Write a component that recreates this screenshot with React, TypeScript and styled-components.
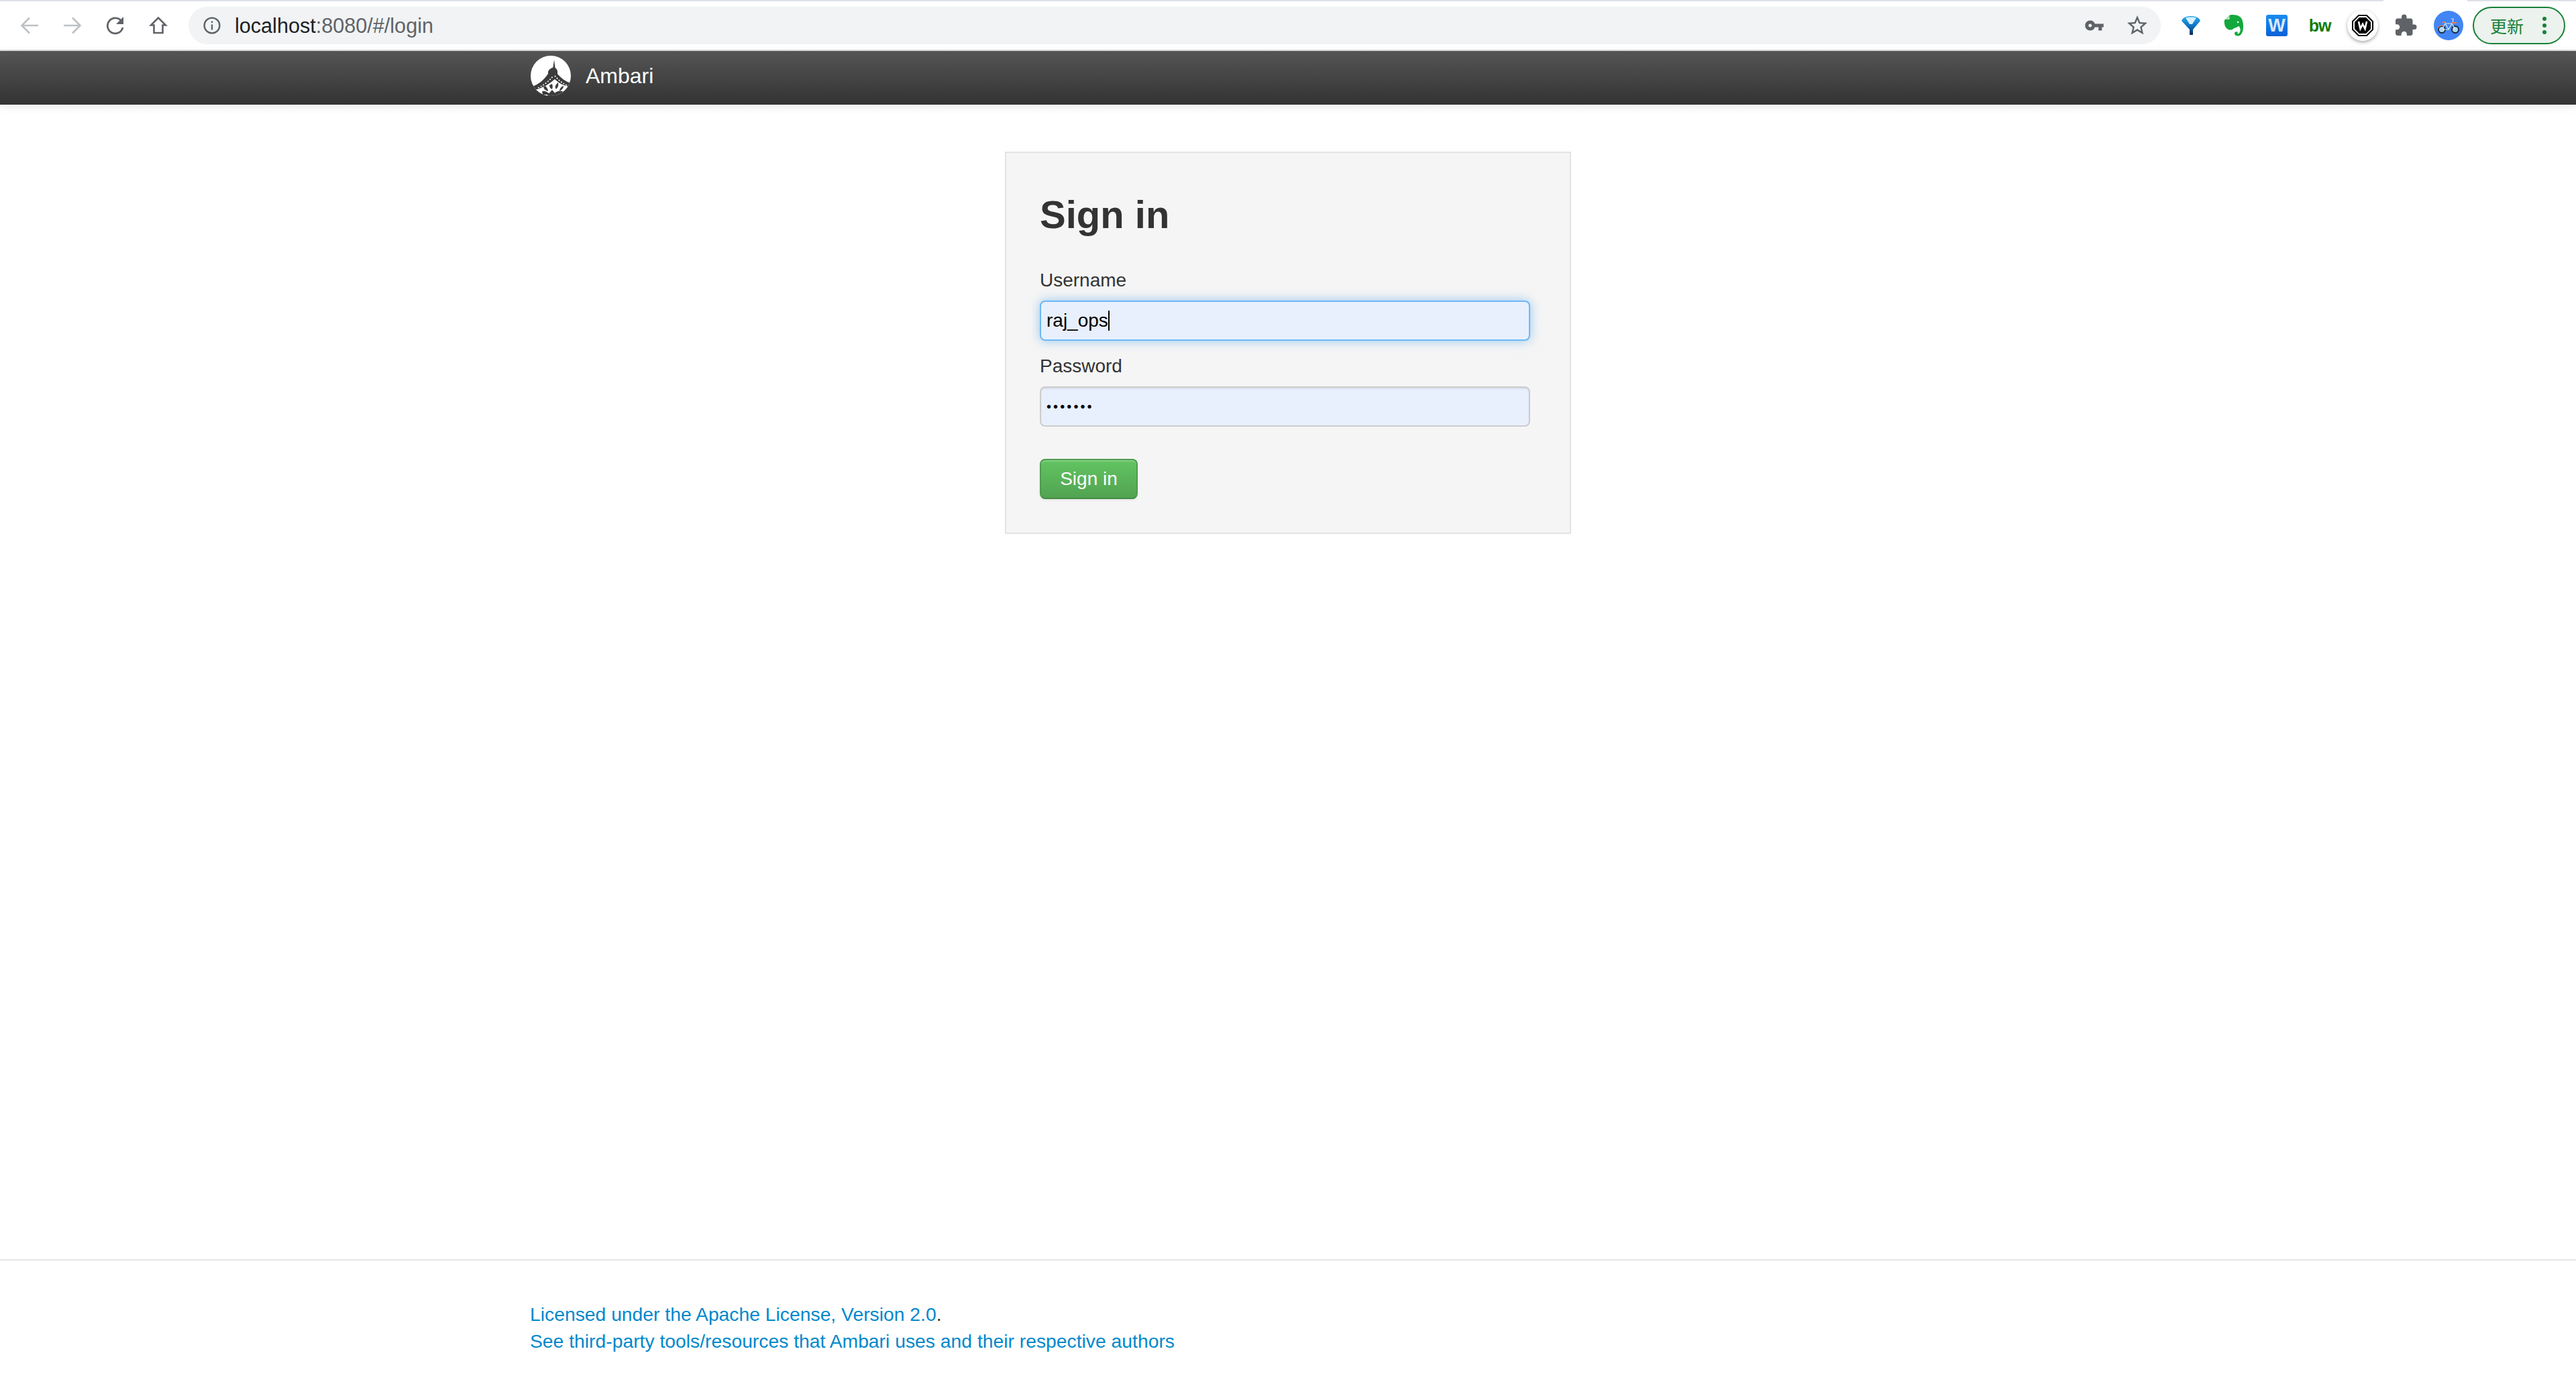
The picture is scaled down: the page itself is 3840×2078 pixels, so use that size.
import React from 'react'
import styled, { createGlobalStyle } from 'styled-components'
import { MdVpnKey, MdStarBorder, MdExtension } from 'react-icons/md'

const GlobalStyle = createGlobalStyle`
  html, body {
    margin: 0;
    height: 100%;
    background: #fff;
    overflow: hidden;
  }

  body {
    font-family: "Liberation Sans", Arial, sans-serif;
    color: #333;
  }

  * {
    box-sizing: border-box;
  }
`

const Page = styled.div`
  height: 2078px;
  display: flex;
  flex-direction: column;
`

const TabStrip = styled.div`
  height: 2px;
  flex: none;
  background: #dee1e6;
  display: flex;
  justify-content: flex-end;
  padding-right: 162px;

  span {
    width: 125px;
    background: #fff;
  }
`

const Toolbar = styled.div`
  height: 74px;
  flex: none;
  display: flex;
  align-items: flex-start;
  padding: 8px 16px 0 12px;
  background: #fff;
  border-bottom: 2px solid #dfe1e5;
`

const ToolGroup = styled.div`
  display: flex;
  flex: none;
`

const ToolButton = styled.div<{ $color?: string }>`
  width: 64px;
  height: 56px;
  display: flex;
  align-items: center;
  justify-content: center;
  color: ${(p) => p.$color || '#5f6368'};
`

const Omnibox = styled.div`
  flex: 1;
  height: 56px;
  margin: 0 13px;
  padding: 0 3px 0 22px;
  border-radius: 28px;
  background: #f1f3f4;
  display: flex;
  align-items: center;
`

const Url = styled.div`
  margin-left: 21px;
  font-size: 30.6px;
  color: #5f6368;
  flex: 1;

  b {
    font-weight: 400;
    color: #202124;
  }
`

const BoxIcon = styled.div`
  width: 32px;
  height: 32px;
  border-radius: 3px;
  background: linear-gradient(180deg, #1a8cf0, #0a62d8);
  color: #d8e8fb;
  font-family: "Liberation Sans", Arial, sans-serif;
  font-weight: 700;
  font-size: 27px;
  line-height: 32px;
  text-align: center;
`

const BwIcon = styled.div`
  color: #0c7c0c;
  font-family: "Liberation Sans", Arial, sans-serif;
  font-weight: 700;
  font-size: 25px;
  letter-spacing: -1px;
  line-height: 1;
`

const RoundBadge = styled.div`
  width: 46px;
  height: 46px;
  border-radius: 50%;
  background: #fff;
  box-shadow: 0 2px 5px rgba(0, 0, 0, 0.35);
  display: flex;
  align-items: center;
  justify-content: center;
`

const UpdateButton = styled.div`
  width: 138px;
  height: 56px;
  margin-left: 4px;
  flex: none;
  border: 2px solid #188038;
  border-radius: 28px;
  background: #ecf2ee;
  color: #188038;
  display: flex;
  align-items: center;
  padding-left: 24px;
  font-family: "Noto Sans CJK SC", "Liberation Sans", sans-serif;
  font-size: 25px;
  line-height: 1;
`

const UpdateDots = styled.span`
  margin-left: 28px;
  display: flex;
  flex-direction: column;
  gap: 4px;

  i {
    width: 6px;
    height: 6px;
    border-radius: 50%;
    background: #188038;
  }
`

const NavBar = styled.nav`
  height: 80px;
  flex: none;
  display: flex;
  align-items: center;
  padding: 0 0 6px 791px;
  background: linear-gradient(180deg, #555, #333);
  box-shadow: 0 3px 12px rgba(0, 0, 0, 0.1);
`

const Brand = styled.span`
  margin-left: 22px;
  color: #fff;
  font-size: 32px;
  line-height: 1;
`

const Main = styled.main`
  flex: 1;
  display: flex;
  justify-content: center;
  align-items: flex-start;
  padding-top: 70px;
`

const Card = styled.form`
  width: 844px;
  padding: 52px 50px 50px;
  background: #f5f5f5;
  border: 2px solid #e3e3e3;
`

const Heading = styled.h2`
  margin: 0 0 38px;
  font-size: 58px;
  line-height: 80px;
  font-weight: 700;
  color: #333;
`

const Label = styled.label`
  display: block;
  margin-bottom: 10px;
  font-size: 28px;
  line-height: 40px;
  color: #333;
`

const Field = styled.div<{ $focused?: boolean }>`
  width: 731px;
  height: 60px;
  margin-bottom: 18px;
  padding: 0 8px;
  display: flex;
  align-items: center;
  background: #e8f0fe;
  border: 2px solid ${(p) => (p.$focused ? '#6db7f5' : '#ccc')};
  border-radius: 8px;
  font-size: 28px;
  color: #000;
  box-shadow: ${(p) =>
    p.$focused
      ? '0 0 16px rgba(82, 168, 236, 0.6)'
      : 'inset 0 2px 2px rgba(0, 0, 0, 0.075)'};
`

const Caret = styled.span`
  width: 2px;
  height: 30px;
  background: #000;
`

const Dots = styled.span`
  font-size: 20px;
  letter-spacing: 3.1px;
  color: #000;
`

const SignInButton = styled.button`
  display: block;
  width: 146px;
  height: 60px;
  margin-top: 48px;
  padding: 0;
  border: 2px solid #4f9a4f;
  border-bottom-color: #448a44;
  border-radius: 8px;
  background: linear-gradient(180deg, #62c462, #51a351);
  box-shadow: inset 0 2px 0 rgba(255, 255, 255, 0.2), 0 2px 4px rgba(0, 0, 0, 0.06);
  color: #fff;
  font-family: "Liberation Sans", Arial, sans-serif;
  font-size: 28px;
`

const Footer = styled.footer`
  height: 201px;
  flex: none;
  padding: 60px 0 0 790px;
  border-top: 2px solid #e5e5e5;
  font-size: 28.3px;
  line-height: 40px;
  color: #333;
`

const FooterLink = styled.a`
  color: #08c;
  text-decoration: none;
`

const HomeIcon = () => (
  <svg width="28" height="28" viewBox="0 0 28 28" fill="none" stroke="currentColor" strokeWidth="2.6">
    <path d="M14 2.500 3 13.500h4.500v11.500h13V13.500H25z" strokeLinejoin="miter" />
  </svg>
)

const BackIcon = ({ flip }: { flip?: boolean }) => (
  <svg width="28" height="26" viewBox="0 0 28 26" fill="none" stroke="#bdc1c6" strokeWidth="2.6" style={flip ? { transform: 'scaleX(-1)' } : undefined}>
    <path d="M27 13H3M14 1.500 2.500 13 14 24.500" />
  </svg>
)

const ReloadIcon = () => (
  <svg width="30" height="28" viewBox="0 0 30 28" fill="none">
    <path d="M24 7.500A11.500 11.500 0 1 0 26 17" stroke="#5f6368" strokeWidth="2.8" />
    <path d="M27 1v11H16z" fill="#5f6368" />
  </svg>
)

const InfoIcon = () => (
  <svg width="26" height="26" viewBox="0 0 26 26" fill="none" stroke="#5f6368" strokeWidth="2.4">
    <circle cx="13" cy="13" r="11.4" />
    <path d="M13 11.500v8" />
    <path d="M13 6.500v2.600" />
  </svg>
)

const FunnelIcon = () => (
  <svg width="30" height="30" viewBox="0 0 30 30">
    <defs>
      <linearGradient id="funnelBody" x1="0" y1="0" x2="0" y2="1">
        <stop offset="0" stopColor="#29a8f0" />
        <stop offset="0.55" stopColor="#0d6fc0" />
        <stop offset="1" stopColor="#0a2c50" />
      </linearGradient>
    </defs>
    <path d="M1 8C3 3 8 1 15 1s12 2 14 7L18 21v8h-5v-8z" fill="url(#funnelBody)" />
    <path d="M7 3.500C10 2 20 2 23 3.500L17 13h-4z" fill="#d7f1fd" />
  </svg>
)

const ElephantIcon = () => (
  <svg width="30" height="32" viewBox="0 0 30 32">
    <path d="M9 .5C14-.5 20 0 24 3c4 3 5 9 5 15 0 4-1 9-4 12-3 2.500-8 2-9-1.500-.5-2.500 2-4 4-3 1 .5 1 2 0 2.500 2 1 4-1 4.500-4 .5-3-.5-6-2.500-7-2 2-5 2-8 4-2 2-6 2-9 0C2 19 0 14 1 8z" fill="#14a83c" />
    <path d="M8.500 1.500V7H2.500z" fill="#bfe8c9" />
    <circle cx="21" cy="11" r="1.3" fill="#fff" />
  </svg>
)

const WindIcon = () => (
  <svg width="32" height="32" viewBox="0 0 32 32">
    <path d="M10 1h12l9 9v12l-9 9H10l-9-9V10z" fill="#fff" stroke="#000" strokeWidth="2" />
    <path d="M11 4h10l7 7v10l-7 7H11l-7-7V11z" fill="#000" />
    <path d="M10 10l2.500 11 3.500-7 3.500 7L22 10" fill="none" stroke="#fff" strokeWidth="2.6" />
  </svg>
)

const BikeIcon = () => (
  <svg width="44" height="44" viewBox="0 0 44 44">
    <circle cx="22" cy="22" r="22" fill="#4285f4" />
    <circle cx="12" cy="28" r="5" fill="#a9d8f0" stroke="#14233a" strokeWidth="1.8" />
    <circle cx="32" cy="28" r="5" fill="#a9d8f0" stroke="#14233a" strokeWidth="1.8" />
    <path d="M12 28 17 19h10l5 9M17 19l5 9h-10M22 28l5-9M26 12h3l-1 7" fill="none" stroke="#d5e9f8" strokeWidth="1.2" />
    <path d="M13 16h5v2h-5zM27 17h7v2h-7z" fill="#ef7d4e" />
    <path d="M5.500 26a7 7 0 0 1 9-4l-.5 1a6 6 0 0 0-7.500 3.500z" fill="#ef7d4e" />
  </svg>
)

const AmbariLogo = () => (
  <svg width="60" height="60" viewBox="0 0 60 60">
    <defs>
      <clipPath id="logoClip">
        <circle cx="30" cy="30" r="30" />
      </clipPath>
    </defs>
    <g clipPath="url(#logoClip)">
      <rect width="60" height="60" fill="#fff" />
      <path d="M35 6l1.600 12c3 2 4 5 3.400 9 5 6 11 11 20 14v19H0V47c12-4 20-11 26-20-.5-4 1-7 7.400-9.500z" fill="#3c3c3c" />
      <path d="M11 48c9-4 17-11 23-18M36 30c5 6 11 11 18 14" fill="none" stroke="#fff" strokeWidth="1.6" strokeDasharray="2 2.200" />
      <path d="M36 35c5 5 11 9 24 12l-4 13H40l-8-9-8 9H8l-1-9c13-4 21-9 29-16z" fill="#fff" />
      <path d="M32 42c1 3 1 5 0 8-3-1-4-4-4-6zM41 40c1 4 0 7-3 10-2-3-2-6 3-10zM22 45c2 2 4 5 4 8-4-1-6-3-7-6zM49 45c0 3-2 6-6 8 0-3 2-7 6-8zM17 53c4-1 9 1 12 5H18zM34 58c3-5 8-6 14-5l-4 7H34z" fill="#3c3c3c" />
    </g>
  </svg>
)

export default function App() {
  return (
    <Page>
      <GlobalStyle />
      <TabStrip>
        <span />
      </TabStrip>
      <Toolbar>
        <ToolGroup>
          <ToolButton><BackIcon /></ToolButton>
          <ToolButton><BackIcon flip /></ToolButton>
          <ToolButton><ReloadIcon /></ToolButton>
          <ToolButton><HomeIcon /></ToolButton>
        </ToolGroup>
        <Omnibox>
          <InfoIcon />
          <Url>
            <b>localhost</b>:8080/#/login
          </Url>
          <ToolButton><MdVpnKey size={30} /></ToolButton>
          <ToolButton><MdStarBorder size={36} /></ToolButton>
        </Omnibox>
        <ToolGroup>
          <ToolButton><FunnelIcon /></ToolButton>
          <ToolButton><ElephantIcon /></ToolButton>
          <ToolButton><BoxIcon>W</BoxIcon></ToolButton>
          <ToolButton><BwIcon>bw</BwIcon></ToolButton>
          <ToolButton><RoundBadge><WindIcon /></RoundBadge></ToolButton>
          <ToolButton><MdExtension size={36} /></ToolButton>
          <ToolButton><BikeIcon /></ToolButton>
        </ToolGroup>
        <UpdateButton>
          更新
          <UpdateDots>
            <i />
            <i />
            <i />
          </UpdateDots>
        </UpdateButton>
      </Toolbar>
      <NavBar>
        <AmbariLogo />
        <Brand>Ambari</Brand>
      </NavBar>
      <Main>
        <Card>
          <Heading>Sign in</Heading>
          <Label>Username</Label>
          <Field $focused>
            raj_ops
            <Caret />
          </Field>
          <Label>Password</Label>
          <Field>
            <Dots>•••••••</Dots>
          </Field>
          <SignInButton type="button">Sign in</SignInButton>
        </Card>
      </Main>
      <Footer>
        <div>
          <FooterLink href="#license">Licensed under the Apache License, Version 2.0</FooterLink>.
        </div>
        <div>
          <FooterLink href="#authors">See third-party tools/resources that Ambari uses and their respective authors</FooterLink>
        </div>
      </Footer>
    </Page>
  )
}
